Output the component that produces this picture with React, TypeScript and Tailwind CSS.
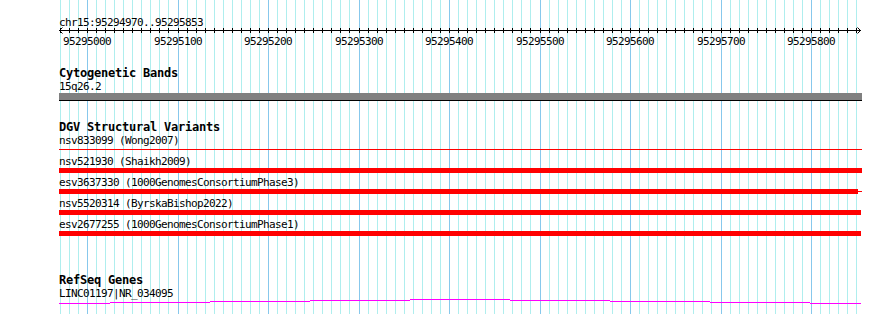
import React from 'react'

const START = 95294970
const END = 95295853
const LEFT = 59

// bp -> page x, measured off the major grid lines
const px = (bp: number) => Math.round(87 + (bp - 95295000) * 0.905)

const gridBps: number[] = []
for (let bp = 95294970; bp <= 95295850; bp += 10) gridBps.push(bp)

const majorBps = gridBps.filter(bp => bp % 100 === 0)

const variants = [
  { label: 'nsv833099 (Wong2007)', thick: 0, thin: 803 },
  { label: 'nsv521930 (Shaikh2009)', thick: 803, thin: 0 },
  { label: 'esv3637330 (1000GenomesConsortiumPhase3)', thick: 799, thin: 803 },
  { label: 'nsv5520314 (ByrskaBishop2022)', thick: 802, thin: 0 },
  { label: 'esv2677255 (1000GenomesConsortiumPhase1)', thick: 802, thin: 0 },
]

// intron "hat" of the refseq gene, drawn in 1px steps
const hat = [
  [59, 110, 4],
  [110, 210, 3],
  [210, 310, 2],
  [310, 410, 1],
  [410, 510, 0],
  [510, 610, 1],
  [610, 710, 2],
  [710, 810, 3],
  [810, 861, 4],
]

const small = "font-['DejaVu_Sans_Mono',monospace] text-[11px] leading-[13px] tracking-[-0.62px] text-black whitespace-nowrap"
const bold = "font-['DejaVu_Sans_Mono',monospace] font-bold text-[12px] leading-[13px] tracking-[-0.22px] text-black whitespace-nowrap"

function Grid() {
  return (
    <svg className="absolute inset-0" width={890} height={314} shapeRendering="crispEdges">
      {gridBps.map(bp => (
        <rect
          key={bp}
          x={px(bp)}
          y={0}
          width={1}
          height={314}
          fill={bp % 100 === 0 ? '#87c8ec' : '#afeeee'}
        />
      ))}
    </svg>
  )
}

function Ruler() {
  const w = 803
  return (
    <svg width={w} height={9} className="block -mt-[3px]" shapeRendering="crispEdges">
      <rect x={0} y={4} width={802} height={1} fill="#000" />
      {gridBps.map(bp => (
        <rect key={bp} x={px(bp) - LEFT} y={2} width={1} height={5} fill="#000" />
      ))}
      <path d="M0.5 4.5 L3.5 1.5 M0.5 4.5 L3.5 7.5" stroke="#000" strokeWidth={1} fill="none" shapeRendering="auto" />
      <path d="M801.5 4.5 L798.5 1.5 M801.5 4.5 L798.5 7.5" stroke="#000" strokeWidth={1} fill="none" shapeRendering="auto" />
    </svg>
  )
}

export default function App() {
  return (
    <div className="relative w-[890px] h-[314px] overflow-hidden bg-white">
      <Grid />
      <div className="relative flex flex-col pl-[59px] w-[862px]">
        <div className={`${small} mt-[16px]`}>chr15:{START}..{END}</div>
        <Ruler />
        <div className="relative h-[13px]">
          {majorBps.map(bp => (
            <span
              key={bp}
              className={`${small} absolute top-0 -translate-x-1/2`}
              style={{ left: px(bp) - LEFT }}
            >
              {bp}
            </span>
          ))}
        </div>

        <div className={`${bold} mt-[19px]`}>Cytogenetic Bands</div>
        <div className={small}>15q26.2</div>
        <div className="h-[8px] w-[803px] bg-[#808080] border-b border-black" />

        <div className={`${bold} mt-[20px]`}>DGV Structural Variants</div>
        <div className="flex flex-col gap-[3px]">
          {variants.map(v => (
            <div key={v.label} className="flex flex-col">
              <div className={small}>{v.label}</div>
              <div className="relative h-[5px] w-[803px]">
                {v.thin > 0 && (
                  <div className="absolute left-0 top-[2px] h-[1px] bg-[#ff0000]" style={{ width: v.thin }} />
                )}
                {v.thick > 0 && <div className="h-[5px] bg-[#ff0000]" style={{ width: v.thick }} />}
              </div>
            </div>
          ))}
        </div>

        <div className={`${bold} mt-[38px]`}>RefSeq Genes</div>
        <div className={small}>LINC01197|NR_034095</div>
        <svg width={803} height={5} className="block -mt-[1px]" shapeRendering="crispEdges">
          {hat.map(([a, b, y]) => (
            <rect key={a} x={a - LEFT} y={y} width={b - a} height={1} fill="#ff00ff" />
          ))}
        </svg>
      </div>
    </div>
  )
}
